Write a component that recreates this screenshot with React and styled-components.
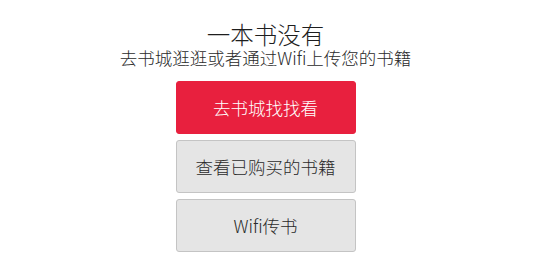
import React from "react";
import styled, { createGlobalStyle } from "styled-components";

const GlobalStyle = createGlobalStyle`
  html, body {
    margin: 0;
    padding: 0;
    background: #ffffff;
  }
  body {
    font-family: "Noto Sans CJK SC", "Noto Sans", "Liberation Sans", sans-serif;
    color: #222222;
  }
`;

function App() {
    return (
        <Page>
            <GlobalStyle />
            <Title>一本书没有</Title>
            <Subtitle>去书城逛逛或者通过Wifi上传您的书籍</Subtitle>
            <Actions>
                <ActionButton $primary>去书城找找看</ActionButton>
                <ActionButton>查看已购买的书籍</ActionButton>
                <ActionButton>Wifi传书</ActionButton>
            </Actions>
        </Page>
    );
}

export default App;

const Page = styled.div`
    width: 531px;
    height: 271px;
    display: flex;
    flex-direction: column;
    align-items: center;
    padding-top: 21px;
    box-sizing: border-box;
`;

const Title = styled.h1`
    margin: 0;
    font-size: 23.5px;
    font-weight: 300;
    line-height: 26px;
    color: #1e1e1e;
`;

const Subtitle = styled.p`
    margin: 0;
    font-size: 17.5px;
    font-weight: 300;
    line-height: 22px;
    color: #2a2a2a;
    white-space: nowrap;
`;

const Actions = styled.div`
    margin-top: 12px;
    display: flex;
    flex-direction: column;
    gap: 6px;
`;

const ActionButton = styled.button`
    width: 180px;
    height: 53px;
    display: flex;
    align-items: center;
    justify-content: center;
    font-family: inherit;
    font-size: 17.5px;
    font-weight: 300;
    border-radius: 3px;
    cursor: pointer;
    background: ${(p) => (p.$primary ? "#e8203e" : "#e5e5e5")};
    color: ${(p) => (p.$primary ? "#ffffff" : "#2a2a2a")};
    border: 1px solid ${(p) => (p.$primary ? "#e8203e" : "#c4c4c4")};
`;
